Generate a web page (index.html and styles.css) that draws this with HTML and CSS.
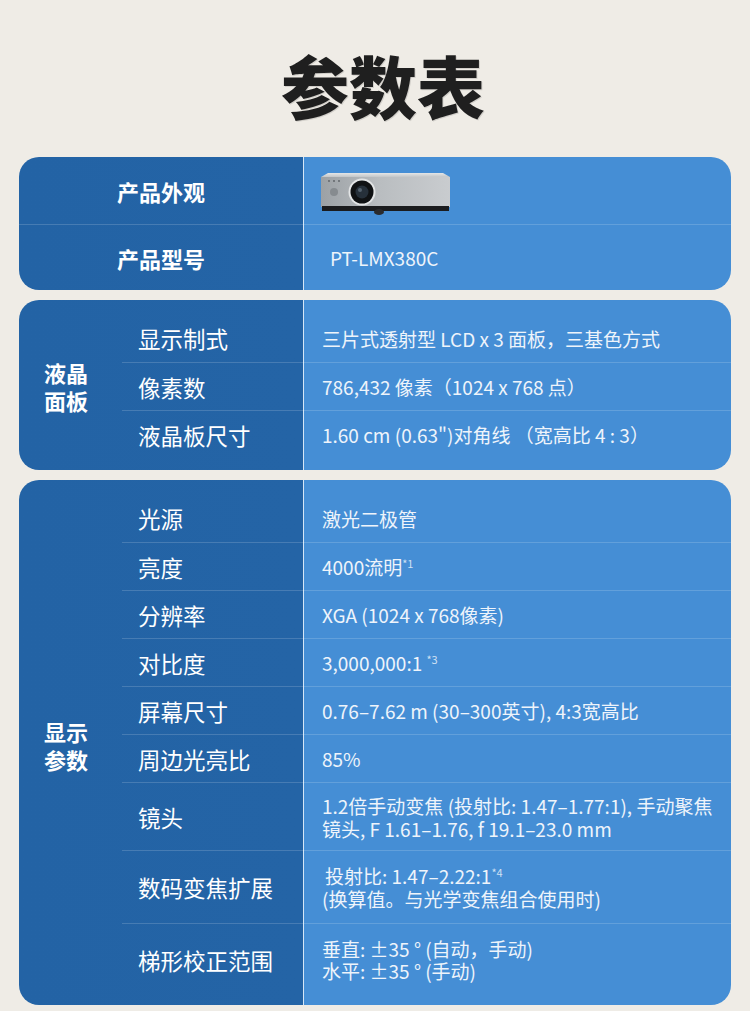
FILE: index.html
```html
<!DOCTYPE html>
<html lang="zh-CN">
<head>
<meta charset="utf-8">
<title>参数表</title>
<link rel="stylesheet" href="styles.css">
</head>
<body>
<h1 class="title">参数表</h1>
<div class="tables">
  <section class="card card-basic">
    <div class="row row-photo">
      <div class="label-main">产品外观</div>
      <div class="value value-photo">
        <svg class="projector" width="130" height="44" viewBox="0 0 130 44">
          <defs>
            <linearGradient id="body" x1="0" y1="0" x2="1" y2="0">
              <stop offset="0" stop-color="#9ca1a5"/>
              <stop offset="0.45" stop-color="#b9bdc0"/>
              <stop offset="1" stop-color="#c9cccf"/>
            </linearGradient>
            <linearGradient id="bevel" x1="0" y1="0" x2="0" y2="1">
              <stop offset="0" stop-color="#e4e6e7"/>
              <stop offset="1" stop-color="#c3c6c8"/>
            </linearGradient>
          </defs>
          <polygon points="7,1 122,1 129,5 0,5" fill="url(#bevel)"/>
          <rect x="0" y="5" width="129" height="30" fill="url(#body)"/>
          <rect x="1" y="34" width="127" height="5" fill="#1b1c1e"/>
          <ellipse cx="58" cy="40" rx="5" ry="3" fill="#2a2b2d"/>
          <circle cx="8" cy="9" r="0.9" fill="#5b6064"/>
          <circle cx="13" cy="9" r="0.9" fill="#5b6064"/>
          <circle cx="18" cy="9" r="0.9" fill="#5b6064"/>
          <circle cx="13" cy="20" r="4" fill="#868b8f"/>
          <circle cx="41" cy="20" r="13.5" fill="#e3e5e6"/>
          <circle cx="41" cy="20" r="11.5" fill="#101214"/>
          <circle cx="41" cy="20" r="6.5" fill="#26303a"/>
          <circle cx="39" cy="18" r="2" fill="#55626e"/>
        </svg>
      </div>
    </div>
    <div class="row row-model">
      <div class="label-main">产品型号</div>
      <div class="value value-model">PT-LMX380C</div>
    </div>
  </section>

  <section class="card card-group card-lcd">
    <div class="group"><span>液晶<br>面板</span></div>
    <div class="rows">
      <div class="row"><div class="sub">显示制式</div><div class="value">三片式透射型 LCD x 3 面板，三基色方式</div></div>
      <div class="row"><div class="sub">像素数</div><div class="value">786,432 像素（1024 x 768 点）</div></div>
      <div class="row"><div class="sub">液晶板尺寸</div><div class="value">1.60 cm (0.63")对角线 （宽高比 4 : 3）</div></div>
    </div>
  </section>

  <section class="card card-group card-display">
    <div class="group"><span>显示<br>参数</span></div>
    <div class="rows">
      <div class="row"><div class="sub">光源</div><div class="value">激光二极管</div></div>
      <div class="row"><div class="sub">亮度</div><div class="value">4000流明<sup class="note">*1</sup></div></div>
      <div class="row"><div class="sub">分辨率</div><div class="value">XGA (1024 x 768像素)</div></div>
      <div class="row"><div class="sub">对比度</div><div class="value">3,000,000:1 <sup class="note">*3</sup></div></div>
      <div class="row"><div class="sub">屏幕尺寸</div><div class="value">0.76–7.62 m (30–300英寸), 4:3宽高比</div></div>
      <div class="row"><div class="sub">周边光亮比</div><div class="value">85%</div></div>
      <div class="row row-lens"><div class="sub">镜头</div><div class="value value-multi">1.2倍手动变焦 (投射比: 1.47–1.77:1), 手动聚焦<br>镜头, F 1.61–1.76, f 19.1–23.0 mm</div></div>
      <div class="row row-zoom"><div class="sub">数码变焦扩展</div><div class="value value-multi"><span class="indent">投射比: 1.47–2.22:1<sup class="note">*4</sup></span><br>(换算值。与光学变焦组合使用时)</div></div>
      <div class="row row-keystone"><div class="sub">梯形校正范围</div><div class="value value-multi value-tight">垂直: ±35 ° (自动，手动)<br>水平: ±35 ° (手动)</div></div>
    </div>
  </section>
</div>
</body>
</html>
```

FILE: styles.css
```css
* {
  box-sizing: border-box;
}

html, body {
  margin: 0;
  padding: 0;
}

body {
  width: 750px;
  min-height: 1011px;
  background: #efece6;
  font-family: "Noto Sans CJK SC", "Noto Sans", sans-serif;
  color: #ffffff;
}

.title {
  margin: 0;
  height: 157px;
  padding-top: 13px;
  padding-left: 16px;
  display: flex;
  align-items: center;
  justify-content: center;
  font-size: 68px;
  font-weight: 900;
  line-height: 1;
  color: #1f1f1f;
  text-shadow: 1px 1px 0 rgba(0, 0, 0, 0.12);
}

.tables {
  display: flex;
  flex-direction: column;
  gap: 10px;
  padding: 0 19px;
}

.card {
  border-radius: 20px;
  overflow: hidden;
  background: linear-gradient(90deg, #2363a5 0, #2464a6 284px, #d6e6f6 284px, #d6e6f6 285.5px, #458ed5 285.5px);
}

.row {
  display: flex;
  align-items: center;
  height: 48px;
}

.row + .row {
  border-top: 1px solid rgba(255, 255, 255, 0.16);
}

.value {
  flex: 1;
  padding-left: 19px;
  font-size: 19px;
  line-height: 23px;
  color: #eef4fb;
}

/* basic card */
.row-photo {
  height: 67px;
}

.row-model {
  height: 66px;
}

.label-main {
  width: 284px;
  text-align: center;
  font-size: 22px;
  font-weight: 700;
}

.value-photo {
  padding-left: 18px;
  padding-top: 6px;
  display: flex;
  align-items: center;
}

.projector {
  display: block;
}

.value-model {
  padding-left: 27px;
}

/* group cards */
.card-group {
  display: flex;
  padding: 14px 0 12px;
}

.card-display {
  padding-bottom: 10px;
}

.group {
  width: 103px;
  display: flex;
  align-items: center;
  padding-left: 25px;
  font-size: 22px;
  font-weight: 700;
  line-height: 28px;
}

.rows {
  flex: 1;
  display: flex;
  flex-direction: column;
}

.sub {
  width: 181px;
  padding-left: 16px;
  font-size: 22.5px;
  font-weight: 400;
}

.row-lens {
  height: 68px;
}

.row-zoom {
  height: 73px;
}

.row-keystone {
  height: 72px;
}

.value-tight {
  line-height: 22px;
}

.indent {
  padding-left: 3px;
}

.note {
  font-size: 11px;
  line-height: 0;
  vertical-align: 7px;
  color: rgba(255, 255, 255, 0.75);
}
```
